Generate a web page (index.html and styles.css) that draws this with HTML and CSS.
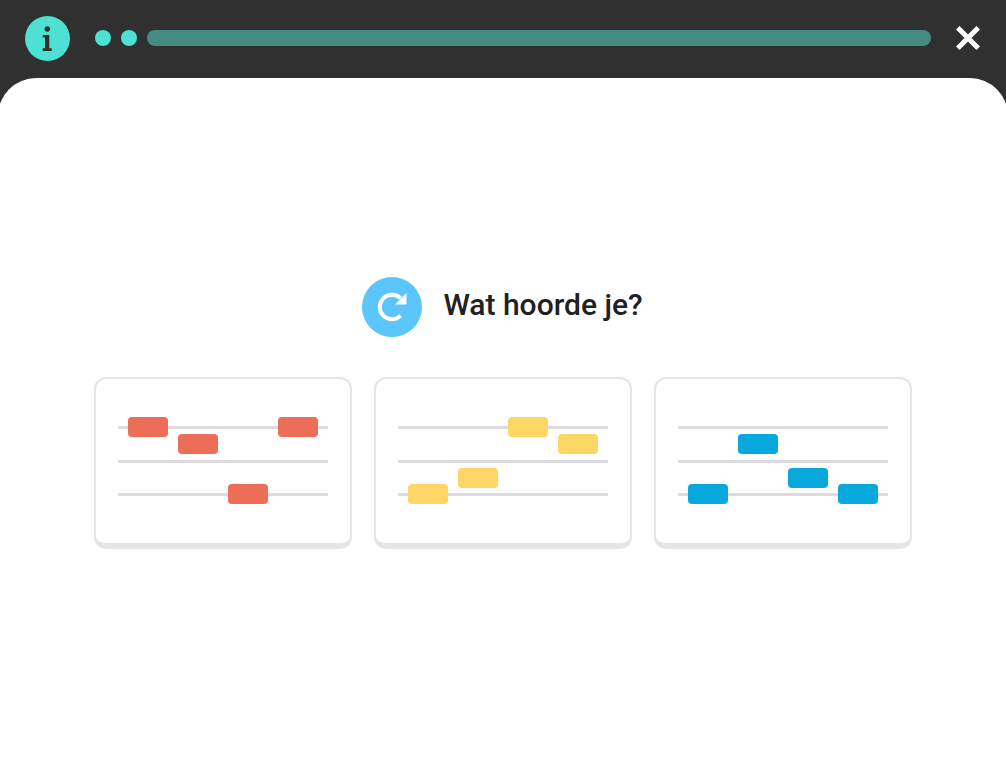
FILE: index.html
```html
<!DOCTYPE html>
<html lang="en">

<head>
    <meta charset="UTF-8">
    <meta name="viewport" content="width=device-width, initial-scale=1.0">
    <title>Wat hoorde je?</title>
    <link rel="stylesheet" href="styles.css">
</head>

<body>

    <header class="topbar">
        <svg class="info-icon" viewBox="0 0 45 45">
            <circle cx="22.5" cy="22.500" r="22.5" fill="#4de0d3" />
            <circle cx="22.3" cy="13" r="2.7" fill="#303030" />
            <path d="M17.700 19h6.600v13.300h2.400V35h-9v-2.700H20v-10.800h-2.300z" fill="#303030" />
        </svg>
        <div class="progress">
            <span class="dot"></span>
            <span class="dot"></span>
            <span class="bar"></span>
        </div>
        <svg class="close-icon" viewBox="0 0 26 26">
            <path d="M2.800 2.800L23.200 23.200M23.200 2.800L2.800 23.200" stroke="#fff" stroke-width="5" fill="none" />
        </svg>
    </header>

    <main class="panel">
        <div class="question">
            <svg class="replay-icon" viewBox="0 0 60 60">
                <circle cx="30" cy="30" r="30" fill="#5cc5fa" />
                <path d="M38.600 38.600A12.200 12.200 0 1 1 38.600 21.400" stroke="#fff" stroke-width="4" fill="none" />
                <path d="M44.500 16v11.500H33z" fill="#fff" />
            </svg>
            <h1>Wat hoorde je?</h1>
        </div>

        <div class="options">
            <div class="card red">
                <div class="staff">
                    <span class="line"></span>
                    <span class="line"></span>
                    <span class="line"></span>
                    <span class="note col-0 row-0"></span>
                    <span class="note col-1 row-1"></span>
                    <span class="note col-3 row-0"></span>
                    <span class="note col-2 row-3"></span>
                </div>
            </div>
            <div class="card yellow">
                <div class="staff">
                    <span class="line"></span>
                    <span class="line"></span>
                    <span class="line"></span>
                    <span class="note col-2 row-0"></span>
                    <span class="note col-3 row-1"></span>
                    <span class="note col-1 row-2"></span>
                    <span class="note col-0 row-3"></span>
                </div>
            </div>
            <div class="card blue">
                <div class="staff">
                    <span class="line"></span>
                    <span class="line"></span>
                    <span class="line"></span>
                    <span class="note col-1 row-1"></span>
                    <span class="note col-2 row-2"></span>
                    <span class="note col-0 row-3"></span>
                    <span class="note col-3 row-3"></span>
                </div>
            </div>
        </div>
    </main>

</body>

</html>
```

FILE: styles.css
```css
html,
body {
    height: 100%;
}

body {
    font-family: 'Roboto', sans-serif;
    background-color: #303030;
    color: #212121;
    margin: 0;
    padding: 0;
    display: flex;
    flex-direction: column;
    overflow: hidden;
}

.topbar {
    height: 78px;
    flex-shrink: 0;
    display: flex;
    align-items: flex-start;
    padding: 16px 25px 0;
    box-sizing: border-box;
}

.info-icon {
    width: 45px;
    height: 45px;
    flex-shrink: 0;
}

.progress {
    flex: 1;
    display: flex;
    align-items: center;
    gap: 10px;
    margin: 14px 24px 0 25px;
}

.dot {
    width: 16px;
    height: 16px;
    border-radius: 50%;
    background-color: #4de0d3;
}

.bar {
    flex: 1;
    height: 16px;
    border-radius: 8px;
    background-color: #448b81;
}

.close-icon {
    width: 26px;
    height: 26px;
    flex-shrink: 0;
    margin-top: 9px;
}

.panel {
    flex: 1;
    background-color: #fff;
    border-radius: 38px 38px 0 0;
    margin: 0 -2px;
    padding-top: 199px;
    display: flex;
    flex-direction: column;
    align-items: center;
}

.question {
    display: flex;
    align-items: center;
    gap: 21px;
    margin-bottom: 40px;
}

.replay-icon {
    width: 60px;
    height: 60px;
}

h1 {
    font-size: 30px;
    font-weight: 500;
    margin: 0 1px 6px 0;
}

.options {
    display: flex;
    gap: 22px;
}

.card {
    width: 258px;
    height: 172px;
    box-sizing: border-box;
    background-color: #fff;
    border: 2px solid #e5e5e5;
    border-bottom-width: 6px;
    border-radius: 12px;
    padding: 47px 22px 0;
}

.staff {
    position: relative;
    width: 210px;
}

.line {
    display: block;
    height: 3px;
    background-color: #dcdcdc;
    margin-bottom: 31px;
}

.line:nth-child(2) {
    margin-bottom: 30px;
}

.note {
    position: absolute;
    width: 40px;
    height: 20px;
    border-radius: 4px;
}

.red .note {
    background-color: #ec6d58;
}

.yellow .note {
    background-color: #fdd666;
}

.blue .note {
    background-color: #07a9dc;
}

.col-0 { left: 10px; }
.col-1 { left: 60px; }
.col-2 { left: 110px; }
.col-3 { left: 160px; }

.row-0 { top: -9px; }
.row-1 { top: 8px; }
.row-2 { top: 42px; }
.row-3 { top: 58px; }
```
